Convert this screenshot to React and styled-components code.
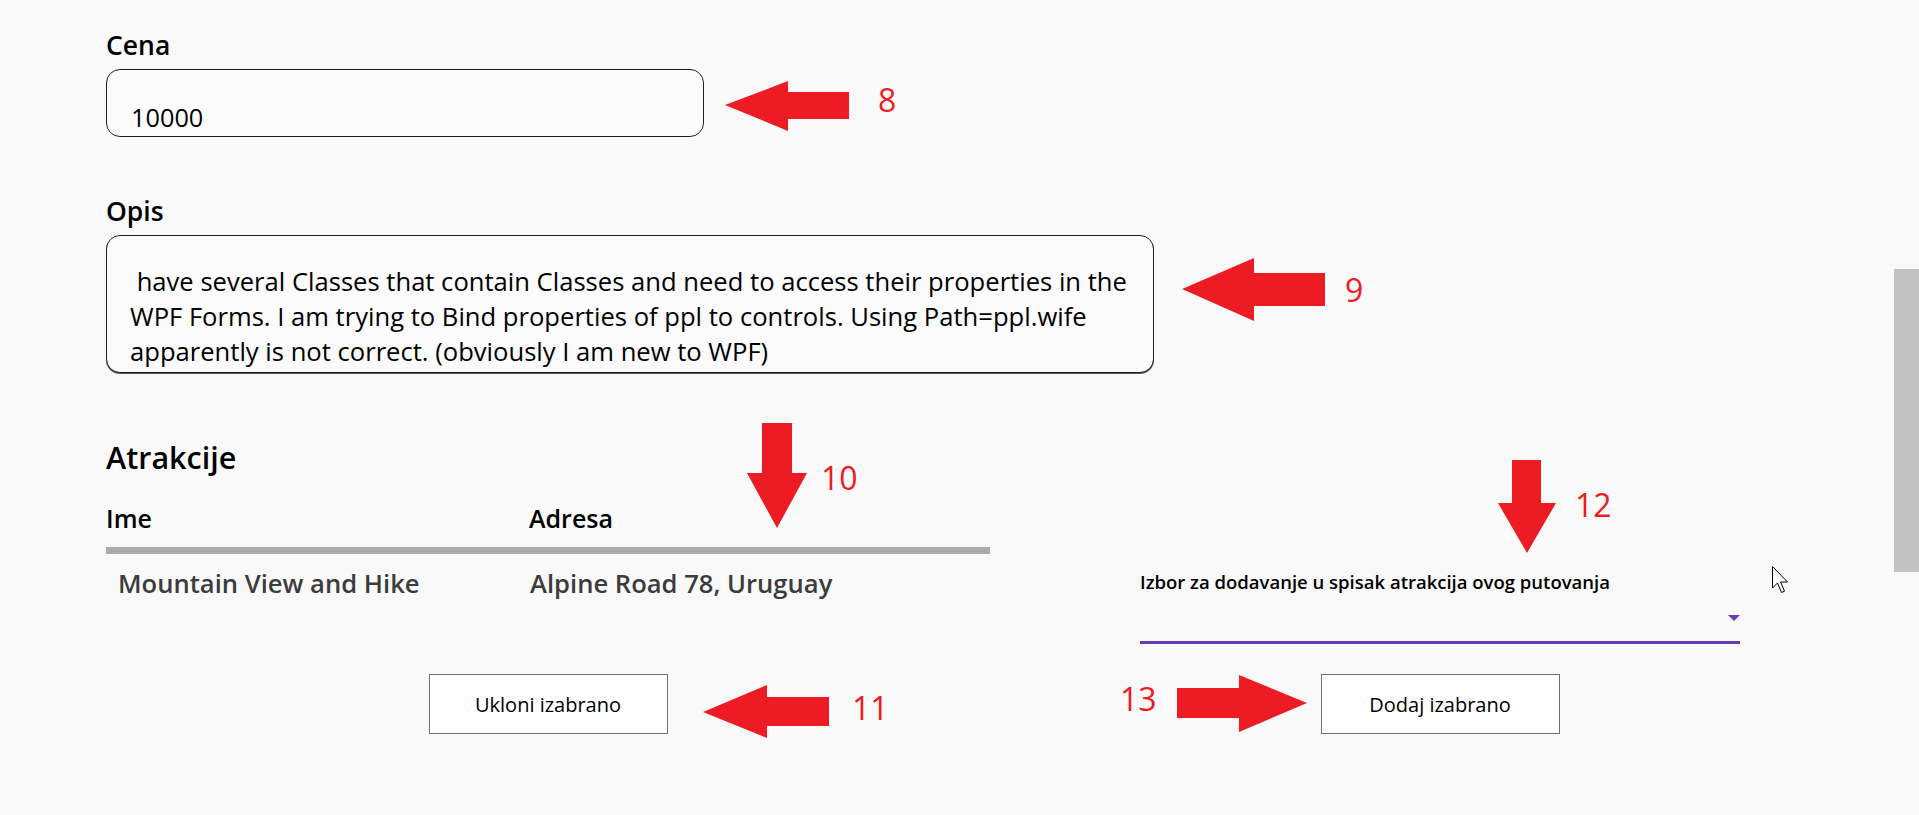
import React from "react";
import styled, { createGlobalStyle } from "styled-components";

const GlobalStyle = createGlobalStyle`
  html, body {
    margin: 0;
    padding: 0;
    background: #f9f9f9;
    overflow: hidden;
  }
  body {
    font-family: "Open Sans", "Noto Sans", sans-serif;
    color: #000;
  }
`;

const Page = styled.div`
  position: relative;
  box-sizing: border-box;
  width: 1919px;
  height: 815px;
  padding: 30px 0 0 106px;
  background: #f9f9f9;
`;

const FieldLabel = styled.div`
  font-size: 26.5px;
  line-height: 30px;
  font-weight: 600;
  margin: ${(p) => p.$top || 0}px 0 9px;
`;

const PriceBox = styled.div`
  box-sizing: border-box;
  width: 598px;
  height: 68px;
  border: 1px solid #1f1f1f;
  border-radius: 14px;
  display: flex;
  align-items: flex-end;
  padding: 0 24px 3px;
  font-size: 25.3px;
  line-height: 32px;
  background: #fbfbfb;
`;

const DescBox = styled.div`
  box-sizing: border-box;
  width: 1048px;
  height: 138px;
  border: 1px solid #1f1f1f;
  border-radius: 14px;
  padding: 28px 0 0 23px;
  font-size: 25.6px;
  line-height: 35px;
  white-space: pre-wrap;
  background: #fbfbfb;
  box-shadow: 0 1px 0 #555;
`;

const Lower = styled.div`
  display: grid;
  grid-template-columns: 884px 600px;
  column-gap: 150px;
  row-gap: 30px;
  margin-top: 64px;
`;

const LeftBlock = styled.div`
  display: flex;
  flex-direction: column;
`;

const Heading = styled.div`
  font-size: 30.5px;
  line-height: 40px;
  font-weight: 600;
`;

const Table = styled.div`
  margin-top: 26px;
`;

const HeaderRow = styled.div`
  display: grid;
  grid-template-columns: 423px 1fr;
  font-size: 25px;
  line-height: 30px;
  font-weight: 600;
  padding-bottom: 14px;
  border-bottom: 7px solid #ababab;
`;

const TableBody = styled.div`
  min-height: 90px;
`;

const DataRow = styled.div`
  display: grid;
  grid-template-columns: 424px 1fr;
  padding-top: 15px;
  font-size: 25.6px;
  line-height: 30px;
  font-weight: 600;
  color: #3c3c3c;
`;

const Cell = styled.div`
  padding-left: ${(p) => p.$pad || 0}px;
`;

const RightBlock = styled.div`
  align-self: end;
  display: flex;
  flex-direction: column;
`;

const SelectLabel = styled.div`
  font-size: 18.5px;
  line-height: 26px;
  font-weight: 600;
`;

const Select = styled.div`
  box-sizing: border-box;
  height: 49px;
  border-bottom: 3px solid #673ab7;
  display: flex;
  align-items: center;
  justify-content: flex-end;
`;

const Caret = styled.span`
  width: 0;
  height: 0;
  border-left: 6px solid transparent;
  border-right: 6px solid transparent;
  border-top: 6px solid #673ab7;
`;

const Button = styled.button`
  justify-self: center;
  box-sizing: border-box;
  width: 239px;
  height: 60px;
  background: #fff;
  border: 1px solid #707070;
  border-radius: 0;
  font-family: "Open Sans", "Noto Sans", sans-serif;
  font-size: 20px;
  color: #000;
  padding: 0;
`;

const ScrollThumb = styled.div`
  position: absolute;
  right: 0;
  top: 269px;
  width: 25px;
  height: 303px;
  background: #c2c2c2;
`;

const ArrowSvg = styled.svg`
  position: absolute;
  left: ${(p) => p.$x}px;
  top: ${(p) => p.$y}px;
  overflow: visible;
`;

const Num = styled.span`
  position: absolute;
  left: ${(p) => p.$x}px;
  top: ${(p) => p.$y}px;
  font-size: 32px;
  line-height: 32px;
  color: #ed1c24;
  font-family: "Open Sans", "Noto Sans", sans-serif;
`;

const CursorSvg = styled.svg`
  position: absolute;
  left: 1772px;
  top: 566px;
  overflow: visible;
`;

const arrows = [
  { x: 725, y: 81, w: 124, h: 50, pts: "0,24 63,0 63,11 124,11 124,38 63,38 63,50" },
  { x: 1182, y: 258, w: 143, h: 63, pts: "0,31 72,0 72,15 143,15 143,48 72,48 72,63" },
  { x: 747, y: 423, w: 60, h: 105, pts: "15,0 45,0 45,50 60,50 30,105 0,50 15,50" },
  { x: 703, y: 685, w: 126, h: 53, pts: "0,27 64,0 64,12 126,12 126,41 64,41 64,53" },
  { x: 1498, y: 460, w: 58, h: 93, pts: "14,0 43,0 43,43 58,43 29,93 0,43 14,43" },
  { x: 1177, y: 675, w: 130, h: 57, pts: "0,13 62,13 62,0 130,28 62,57 62,43 0,43" },
];

const numbers = [
  { n: "8", x: 878, y: 84 },
  { n: "9", x: 1345, y: 274 },
  { n: "10", x: 821, y: 462 },
  { n: "11", x: 852, y: 692 },
  { n: "12", x: 1575, y: 489 },
  { n: "13", x: 1120, y: 683 },
];

const desc =
  " have several Classes that contain Classes and need to access their properties in the WPF Forms. I am trying to Bind properties of ppl to controls. Using Path=ppl.wife apparently is not correct. (obviously I am new to WPF)";

export default function App() {
  return (
    <>
      <GlobalStyle />
      <Page>
        <FieldLabel>Cena</FieldLabel>
        <PriceBox>10000</PriceBox>

        <FieldLabel $top={59}>Opis</FieldLabel>
        <DescBox>{desc}</DescBox>

        <Lower>
          <LeftBlock>
            <Heading>Atrakcije</Heading>
            <Table>
              <HeaderRow>
                <Cell>Ime</Cell>
                <Cell>Adresa</Cell>
              </HeaderRow>
              <TableBody>
                <DataRow>
                  <Cell $pad={12}>Mountain View and Hike</Cell>
                  <Cell>Alpine Road 78, Uruguay</Cell>
                </DataRow>
              </TableBody>
            </Table>
          </LeftBlock>

          <RightBlock>
            <SelectLabel>Izbor za dodavanje u spisak atrakcija ovog putovanja</SelectLabel>
            <Select>
              <Caret />
            </Select>
          </RightBlock>

          <Button>Ukloni izabrano</Button>
          <Button>Dodaj izabrano</Button>
        </Lower>

        <ScrollThumb />

        {arrows.map((a, i) => (
          <ArrowSvg key={i} $x={a.x} $y={a.y} width={a.w} height={a.h} viewBox={`0 0 ${a.w} ${a.h}`}>
            <polygon points={a.pts} fill="#ed1c24" />
          </ArrowSvg>
        ))}
        {numbers.map((n) => (
          <Num key={n.n} $x={n.x} $y={n.y}>
            {n.n}
          </Num>
        ))}

        <CursorSvg width="18" height="28" viewBox="0 0 18 28">
          <path
            d="M0.5 0.5 L0.5 22 L5.5 17 L9.5 26.5 L12.5 25.2 L8.6 16 L15.5 16 Z"
            fill="#fff"
            stroke="#000"
            strokeWidth="1"
            strokeLinejoin="round"
          />
        </CursorSvg>
      </Page>
    </>
  );
}
